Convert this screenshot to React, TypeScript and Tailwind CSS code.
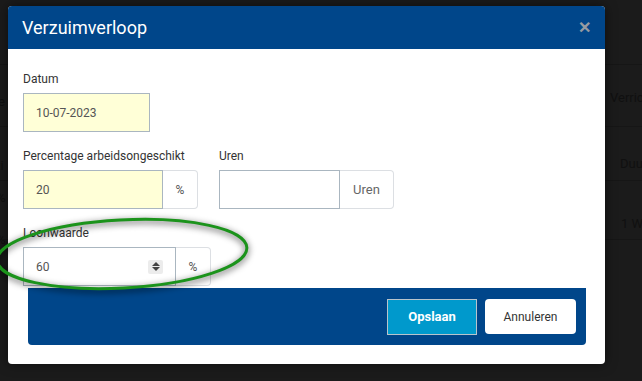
import React from 'react'

// Dimmed page behind the dialog, only faint traces are visible
function BackgroundPage() {
  return (
    <div className="absolute inset-0 bg-[#1b1b1b] text-[#101010] text-[13px] whitespace-nowrap">
      <div className="absolute left-0 right-0 top-[64px] border-t border-[#161616]" />
      <div className="absolute left-0 right-0 top-[126px] border-t border-[#161616]" />
      <div className="absolute left-0 right-0 top-[180px] border-t border-[#161616]" />
      <div className="absolute left-0 right-0 top-[239px] border-t border-[#161616]" />

      {/* left strip */}
      <div className="absolute left-0 top-0 w-[8px] h-full overflow-hidden">
        <div className="absolute left-[-2px] top-[92px]">e</div>
        <div className="absolute left-[-6px] top-[156px]">zi</div>
        <div className="absolute left-[-4px] top-[188px]">%</div>
        <div className="absolute left-[-4px] top-[230px]">%</div>
      </div>

      {/* right strip */}
      <div className="absolute left-[605px] top-0 w-[37px] h-full overflow-hidden">
        <div className="absolute left-[5px] top-[88px]">Verric</div>
        <div className="absolute left-[15px] top-[154px]">Duu</div>
        <div className="absolute left-[16px] top-[214px]">1 W</div>
      </div>
    </div>
  )
}

interface Props {
  label:    string
  children: React.ReactNode
}

function Field({ label, children }: Props) {
  return (
    <div className="flex flex-col">
      <label className="text-[12px] leading-[14px] text-[#333] mb-[7px]">{label}</label>
      {children}
    </div>
  )
}

function Spinner() {
  return (
    <span className="flex flex-col items-center justify-center gap-[1px] w-[15px] h-[14px] bg-[#ececec] rounded-[2px]">
      <svg width="8" height="4" viewBox="0 0 8 4"><path d="M0 4 L4 0 L8 4 Z" fill="#444" /></svg>
      <svg width="8" height="4" viewBox="0 0 8 4"><path d="M0 0 L8 0 L4 4 Z" fill="#444" /></svg>
    </span>
  )
}

export default function App() {
  return (
    <div className="relative w-[642px] h-[381px] overflow-hidden" style={{ fontFamily: 'Roboto, "Liberation Sans", sans-serif' }}>
      <BackgroundPage />

      {/* modal */}
      <div className="absolute left-[8px] top-[6px] w-[597px] h-[358px] bg-white rounded-[4px] flex flex-col shadow-[0_0_12px_rgba(0,0,0,0.5)]">
        <div className="h-[43px] shrink-0 bg-[#00468a] rounded-t-[4px] flex items-center justify-between pl-[14px] pr-[14px]">
          <h2 className="text-white text-[18px] leading-none">Verzuimverloop</h2>
          <span className="text-[#959ba2] text-[16px] font-bold leading-none">✕</span>
        </div>

        <div className="flex flex-col pl-[15px] pt-[23px] gap-[17px]">
          <Field label="Datum">
            <div className="w-[127px] h-[39px] bg-[#ffffd7] border border-[#aab6c0] flex items-center pl-[12px] text-[12px] text-[#555]">
              10-07-2023
            </div>
          </Field>

          <div className="flex gap-[21px]">
            <Field label="Percentage arbeidsongeschikt">
              <div className="flex h-[39px]">
                <div className="w-[140px] bg-[#ffffd7] border border-[#aab6c0] flex items-center pl-[12px] text-[12px] text-[#555]">20</div>
                <div className="w-[35px] border border-l-0 border-[#dcdfe3] rounded-r-[4px] flex items-center justify-center text-[12px] text-[#555]">%</div>
              </div>
            </Field>
            <Field label="Uren">
              <div className="flex h-[39px]">
                <div className="w-[121px] bg-white border border-[#aab6c0]" />
                <div className="w-[54px] border border-l-0 border-[#dcdfe3] rounded-r-[4px] flex items-center justify-center text-[13px] text-[#666]">Uren</div>
              </div>
            </Field>
          </div>

          <Field label="Loonwaarde">
            <div className="flex h-[39px]">
              <div className="w-[153px] bg-white border border-[#aab6c0] flex items-center justify-between pl-[12px] pr-[12px] text-[12px] text-[#555]">
                60
                <Spinner />
              </div>
              <div className="w-[35px] border border-l-0 border-[#dcdfe3] rounded-r-[4px] flex items-center justify-center text-[12px] text-[#555]">%</div>
            </div>
          </Field>
        </div>

        <div className="mt-[2px] ml-[20px] mr-[19px] h-[57px] bg-[#00468a] rounded-b-[4px] flex items-center justify-end gap-[8px] pr-[10px]">
          <button className="w-[90px] h-[36px] bg-[#0099cc] border border-[#b9c4cc] text-white text-[13px] font-bold">Opslaan</button>
          <button className="w-[91px] h-[35px] bg-white rounded-[4px] text-[#333] text-[12px]">Annuleren</button>
        </div>
      </div>

      {/* green highlight drawn over the form */}
      <svg className="absolute left-0 top-0 pointer-events-none" width="642" height="381">
        <defs>
          <filter id="sh" x="-20%" y="-40%" width="140%" height="180%">
            <feGaussianBlur stdDeviation="3" />
          </filter>
        </defs>
        <ellipse cx="122" cy="256" rx="125" ry="34" transform="rotate(-3 122 256)" fill="none" stroke="rgba(0,0,0,0.45)" strokeWidth="5" filter="url(#sh)" />
        <ellipse cx="122" cy="254" rx="125" ry="34" transform="rotate(-3 122 254)" fill="none" stroke="#1b931b" strokeWidth="3" />
      </svg>
    </div>
  )
}
